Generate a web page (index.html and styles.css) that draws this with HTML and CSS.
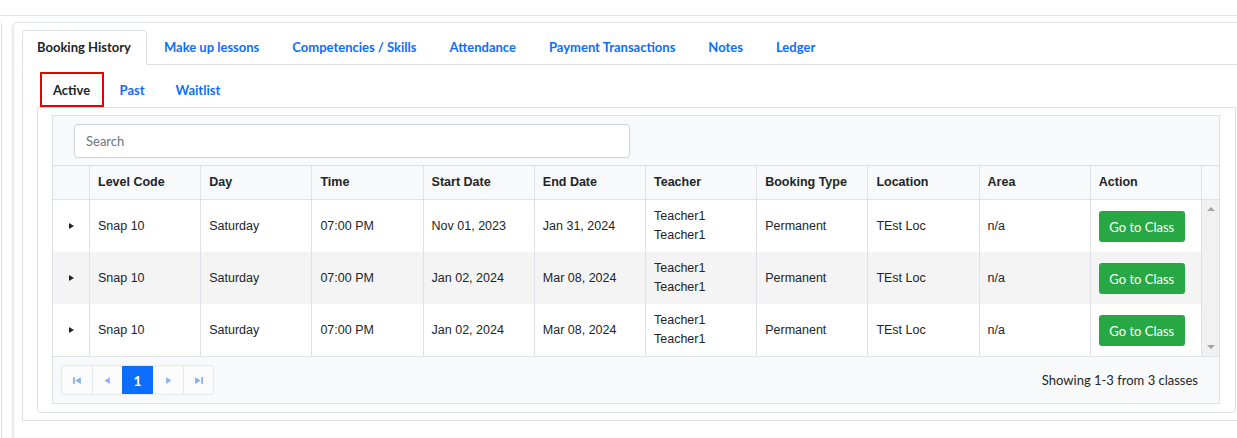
FILE: index.html
```html
<!DOCTYPE html>
<html>
<head>
  <meta charset="utf-8">
  <title>Booking History</title>
  <link rel="stylesheet" href="styles.css">
</head>
<body>
  <div class="topbar"></div>

  <div class="page">
    <div class="rail"></div>

    <div class="card">
      <div class="tabs">
        <a class="tab active">Booking History</a>
        <a class="tab">Make up lessons</a>
        <a class="tab">Competencies / Skills</a>
        <a class="tab">Attendance</a>
        <a class="tab">Payment Transactions</a>
        <a class="tab">Notes</a>
        <a class="tab">Ledger</a>
      </div>

      <div class="tab-body">
        <div class="subtabs">
          <a class="subtab active">Active</a>
          <a class="subtab">Past</a>
          <a class="subtab">Waitlist</a>
        </div>

        <div class="subtab-body">
          <div class="grid-box">
            <div class="search-row">
              <input class="search" type="text" placeholder="Search">
            </div>

            <div class="thead">
              <div class="th"></div>
              <div class="th">Level Code</div>
              <div class="th">Day</div>
              <div class="th">Time</div>
              <div class="th">Start Date</div>
              <div class="th">End Date</div>
              <div class="th">Teacher</div>
              <div class="th">Booking Type</div>
              <div class="th">Location</div>
              <div class="th">Area</div>
              <div class="th">Action</div>
              <div class="th gutter"></div>
            </div>

            <div class="tbody">
              <div class="rows">
                <div class="tr">
                  <div class="td"><span class="caret"></span></div>
                  <div class="td">Snap 10</div>
                  <div class="td">Saturday</div>
                  <div class="td">07:00 PM</div>
                  <div class="td">Nov 01, 2023</div>
                  <div class="td">Jan 31, 2024</div>
                  <div class="td">Teacher1<br>Teacher1</div>
                  <div class="td">Permanent</div>
                  <div class="td">TEst Loc</div>
                  <div class="td">n/a</div>
                  <div class="td"><button class="btn-go">Go to Class</button></div>
                </div>
                <div class="tr alt">
                  <div class="td"><span class="caret"></span></div>
                  <div class="td">Snap 10</div>
                  <div class="td">Saturday</div>
                  <div class="td">07:00 PM</div>
                  <div class="td">Jan 02, 2024</div>
                  <div class="td">Mar 08, 2024</div>
                  <div class="td">Teacher1<br>Teacher1</div>
                  <div class="td">Permanent</div>
                  <div class="td">TEst Loc</div>
                  <div class="td">n/a</div>
                  <div class="td"><button class="btn-go">Go to Class</button></div>
                </div>
                <div class="tr">
                  <div class="td"><span class="caret"></span></div>
                  <div class="td">Snap 10</div>
                  <div class="td">Saturday</div>
                  <div class="td">07:00 PM</div>
                  <div class="td">Jan 02, 2024</div>
                  <div class="td">Mar 08, 2024</div>
                  <div class="td">Teacher1<br>Teacher1</div>
                  <div class="td">Permanent</div>
                  <div class="td">TEst Loc</div>
                  <div class="td">n/a</div>
                  <div class="td"><button class="btn-go">Go to Class</button></div>
                </div>
              </div>
              <div class="scrollbar">
                <span class="arrow up"></span>
                <span class="arrow down"></span>
              </div>
            </div>

            <div class="tfoot">
              <div class="pager">
                <span class="pg">
                  <svg width="9" height="9" viewBox="0 0 8 8"><rect x="0" y="1" width="1.6" height="6" fill="currentColor"/><polygon points="7,1 2,4 7,7" fill="currentColor"/></svg>
                </span>
                <span class="pg">
                  <svg width="9" height="9" viewBox="0 0 8 8"><polygon points="6,1 1.5,4 6,7" fill="currentColor"/></svg>
                </span>
                <span class="pg current">1</span>
                <span class="pg">
                  <svg width="9" height="9" viewBox="0 0 8 8"><polygon points="2,1 6.5,4 2,7" fill="currentColor"/></svg>
                </span>
                <span class="pg">
                  <svg width="9" height="9" viewBox="0 0 8 8"><polygon points="1,1 6,4 1,7" fill="currentColor"/><rect x="6.4" y="1" width="1.6" height="6" fill="currentColor"/></svg>
                </span>
              </div>
              <div class="summary">Showing 1-3 from 3 classes</div>
            </div>
          </div>
        </div>
      </div>
    </div>
  </div>
</body>
</html>
```

FILE: styles.css
```css
* {
  margin: 0;
  padding: 0;
  box-sizing: border-box;
}

body {
  font-family: 'Lato', 'Liberation Sans', sans-serif;
  font-size: 13px;
  color: #212529;
  background: #fff;
  width: 1237px;
  height: 438px;
  overflow: hidden;
}

.topbar {
  height: 16px;
  border-bottom: 1px solid #e3e4e8;
}

.page {
  display: flex;
  padding-top: 6px;
  padding-left: 1px;
}

.rail {
  width: 1px;
  height: 420px;
  margin-top: 1px;
  background: #dde2ea;
}

.card {
  flex: 1;
  margin-left: 11px;
  margin-right: -14px;
  padding: 7px 0 7px 8px;
  border: 1px solid #e6e7ea;
  border-bottom-color: #d4d5d8;
  border-radius: 5px;
  box-shadow: 0 1px 3px rgba(0,0,0,0.18);
  background: #fff;
}

/* main tabs */
.tabs {
  display: flex;
  border-bottom: 1px solid #dee2e6;
}

.tab {
  height: 35px;
  line-height: 33px;
  padding: 0 15.5px 0 15.5px;
  margin-bottom: -1px;
  border: 1px solid transparent;
  font-weight: 700;
  font-size: 13px;
  color: #0d6efd;
  white-space: nowrap;
}

.tab.active {
  color: #212529;
  background: #fff;
  border-color: #dee2e6 #dee2e6 #fff;
  border-radius: 4px 4px 0 0;
  padding-left: 14px;
}

.tab-body {
  border-left: 1px solid #dee2e6;
  border-bottom: 1px solid #dee2e6;
  padding: 7px 14px 7px 14px;
}

/* sub tabs */
.subtabs {
  display: flex;
  padding-left: 3px;
}

.subtab {
  height: 35px;
  line-height: 36px;
  padding: 0 15.5px;
  font-weight: 700;
  font-size: 13px;
  color: #0d6efd;
}

.subtab.active {
  color: #212529;
  border: 2px solid #e80000;
  line-height: 32px;
  padding: 0 12px 0 11px;
}

.subtab-body {
  border: 1px solid #dee2e6;
  border-radius: 0 0 4px 4px;
  padding: 7px 15px 8px 14px;
}

.grid-box {
  border: 1px solid #dee2e6;
  background: #f8f9fa;
}

.search-row {
  padding: 8px 21px 7px;
}

.search {
  display: block;
  width: 556px;
  height: 34px;
  padding: 0 11px;
  border: 1px solid #ced4da;
  border-radius: 4px;
  background: #fff;
  font-family: 'Lato', sans-serif;
  font-size: 13px;
}

.search::placeholder {
  color: #6c757d;
}

/* table */
.thead,
.tr {
  display: grid;
  grid-template-columns: 37px repeat(10, 1fr);
}

.thead {
  grid-template-columns: 37px repeat(10, 1fr) 17px;
  border-top: 1px solid #dee2e6;
  border-bottom: 1px solid #dee2e6;
}

.th {
  height: 33px;
  line-height: 33px;
  padding-left: 8px;
  border-right: 1px solid #dee2e6;
  font-family: 'Liberation Sans', Arial, sans-serif;
  font-weight: 700;
  font-size: 12.5px;
  color: #212529;
  white-space: nowrap;
}

.th.gutter {
  border-right: none;
}

.tbody {
  display: flex;
  border-bottom: 1px solid #dee2e6;
}

.rows {
  flex: 1;
}

.tr {
  background: #fff;
}

.tr.alt {
  background: #f4f4f4;
}

.td {
  height: 52px;
  display: flex;
  align-items: center;
  padding-left: 8px;
  border-right: 1px solid #dee2e6;
  font-family: 'Liberation Sans', Arial, sans-serif;
  font-size: 12.5px;
  line-height: 19px;
  color: #212529;
}

.td:first-child {
  justify-content: center;
  padding-left: 0;
}

.caret {
  width: 0;
  height: 0;
  border-top: 3.5px solid transparent;
  border-bottom: 3.5px solid transparent;
  border-left: 5px solid #222;
}

.btn-go {
  width: 86px;
  height: 31px;
  border: none;
  border-radius: 3px;
  background: #28a745;
  color: #fff;
  font-family: 'Lato', sans-serif;
  font-size: 13px;
  margin-top: 1px;
}

.scrollbar {
  width: 17px;
  background: #f1f1f1;
  display: flex;
  flex-direction: column;
  justify-content: space-between;
  align-items: center;
  padding: 7px 0 7px;
}

.arrow {
  width: 0;
  height: 0;
  border-left: 4px solid transparent;
  border-right: 4px solid transparent;
}

.arrow.up {
  border-bottom: 4px solid #a3a3a3;
}

.arrow.down {
  border-top: 4px solid #a3a3a3;
}

/* footer */
.tfoot {
  display: flex;
  justify-content: space-between;
  align-items: center;
  padding: 8px 21px 8px 8px;
}

.pager {
  display: flex;
  border: 1px solid #e6e9ec;
  border-radius: 4px;
  background: #fcfcfd;
  overflow: hidden;
}

.pg {
  width: 30px;
  height: 28px;
  display: flex;
  align-items: center;
  justify-content: center;
  color: #86aff6;
  border-left: 1px solid #e6e9ec;
}

.pg:first-child {
  border-left: none;
}

.pg.current {
  background: #0d6efd;
  color: #fff;
  font-weight: 700;
  font-size: 14px;
  border-left: none;
  width: 31px;
}

.pg.current + .pg {
  border-left: none;
}

.summary {
  font-size: 13px;
  color: #212529;
}
```
